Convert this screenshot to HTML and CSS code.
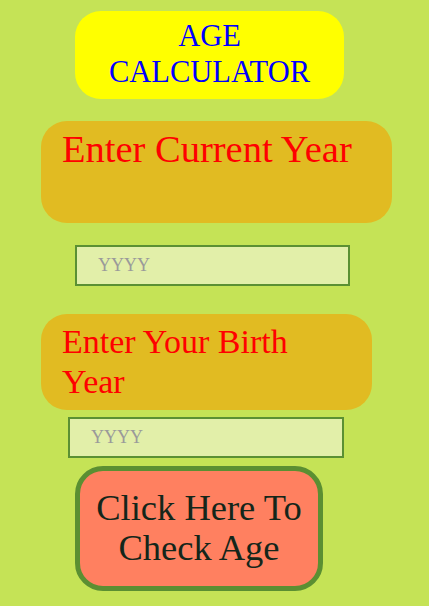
FILE: index.html
```html
<!DOCTYPE html>
<html>
<head>
<meta charset="utf-8">
<title>Age Calculator</title>
<link rel="stylesheet" href="styles.css">
</head>
<body>
<main class="page">
  <h1 class="title">AGE<br>CALCULATOR</h1>
  <div class="label label-current">Enter Current Year</div>
  <input class="year year-current" type="text" placeholder="YYYY">
  <div class="label label-birth">Enter Your Birth Year</div>
  <input class="year year-birth" type="text" placeholder="YYYY">
  <button class="check" type="button">Click Here To<br>Check Age</button>
</main>
</body>
</html>
```
FILE: styles.css
```css
html, body {
  margin: 0;
  padding: 0;
  background: #c5e356;
}
.page {
  display: flex;
  flex-direction: column;
  align-items: flex-start;
  padding-top: 11px;
  min-height: 595px;
  font-family: "Liberation Serif", "Times New Roman", serif;
}
.title {
  margin: 0 0 0 75px;
  width: 269px;
  height: 88px;
  box-sizing: border-box;
  padding-top: 7px;
  background: #ffff00;
  border-radius: 26px;
  color: #0000ff;
  font-weight: normal;
  font-size: 30.5px;
  line-height: 36px;
  text-align: center;
}
.label {
  margin-left: 41px;
  box-sizing: border-box;
  background: #e1bb22;
  border-radius: 26px;
  color: #ff0000;
  padding-left: 21px;
}
.label-current {
  margin-top: 22px;
  width: 351px;
  height: 102px;
  padding-top: 7px;
  font-size: 38.5px;
  line-height: 42px;
}
.label-birth {
  margin-top: 28px;
  width: 331px;
  height: 96px;
  padding-top: 8px;
  padding-right: 21px;
  font-size: 34px;
  line-height: 39.5px;
}
.year {
  box-sizing: border-box;
  height: 41px;
  border: 2px solid #5b9033;
  background: #e2efa9;
  padding: 0 0 0 21px;
  font-family: "Liberation Serif", "Times New Roman", serif;
  font-size: 18px;
  color: #333;
  outline: none;
}
.year::placeholder {
  color: #9a9a9a;
}
.year-current {
  margin: 22px 0 0 75px;
  width: 275px;
}
.year-birth {
  margin: 7px 0 0 68px;
  width: 276px;
}
.check {
  margin: 8px 0 0 75px;
  width: 248px;
  height: 125px;
  box-sizing: border-box;
  border: 5px solid #5b8f32;
  border-radius: 28px;
  background: #ff8060;
  color: #14261a;
  font-family: "Liberation Serif", "Times New Roman", serif;
  font-size: 36.5px;
  line-height: 40px;
  text-align: center;
  padding: 0 0 2px;
  cursor: pointer;
}
```
